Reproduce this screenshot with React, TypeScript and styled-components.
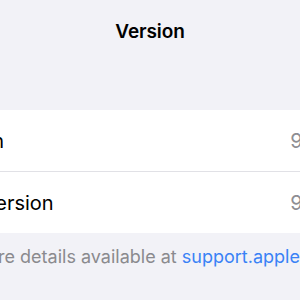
import React from "react";
import styled, { createGlobalStyle } from "styled-components";

const Global = createGlobalStyle`
  html, body { margin: 0; padding: 0; background: #f2f2f7; }
  body { font-family: Inter, "Noto Sans", "Liberation Sans", sans-serif; -webkit-font-smoothing: antialiased; }
`;

const Screen = styled.div`
  width: 300px;
  height: 300px;
  overflow: hidden;
  background: #f2f2f7;
  display: flex;
  flex-direction: column;
`;

const NavBar = styled.div`
  height: 62px;
  display: flex;
  align-items: center;
  justify-content: center;
`;

const Title = styled.h1`
  margin: 0;
  font-size: 19px;
  font-weight: 600;
  color: #000;
  letter-spacing: -0.1px;
`;

const Group = styled.div`
  margin-top: 48px;
  background: #fff;
  display: flex;
  flex-direction: column;
`;

const Row = styled.div<{ $last?: boolean }>`
  height: 61px;
  display: flex;
  align-items: center;
  justify-content: space-between;
  white-space: nowrap;
  border-bottom: ${(p) => (p.$last ? "none" : "1px solid #e1e1e6")};
`;

const Label = styled.span<{ $shift: number }>`
  font-size: 20px;
  color: #000;
  margin-left: ${(p) => -p.$shift}px;
`;

const Value = styled.span<{ $shift: number }>`
  font-size: 20px;
  color: #8e8e93;
  margin-right: ${(p) => -p.$shift}px;
`;

const Footer = styled.p<{ $shift: number }>`
  margin: 13px 0 0 ${(p) => -p.$shift}px;
  font-size: 18px;
  color: #8a8a8e;
  white-space: nowrap;
`;

const Link = styled.span`
  color: #3a82f6;
`;

export default function App() {
  return (
    <>
      <Global />
      <Screen>
        <NavBar>
          <Title>Version</Title>
        </NavBar>
        <Group>
          <Row>
            <Label $shift={67}>Version</Label>
            <Value $shift={37}>9.3.5</Value>
          </Row>
          <Row $last>
            <Label $shift={70}>Build Version</Label>
            <Value $shift={37}>9.3.5</Value>
          </Row>
        </Group>
        <Footer $shift={29}>
          More details available at <Link>support.apple.com</Link>
        </Footer>
      </Screen>
    </>
  );
}
